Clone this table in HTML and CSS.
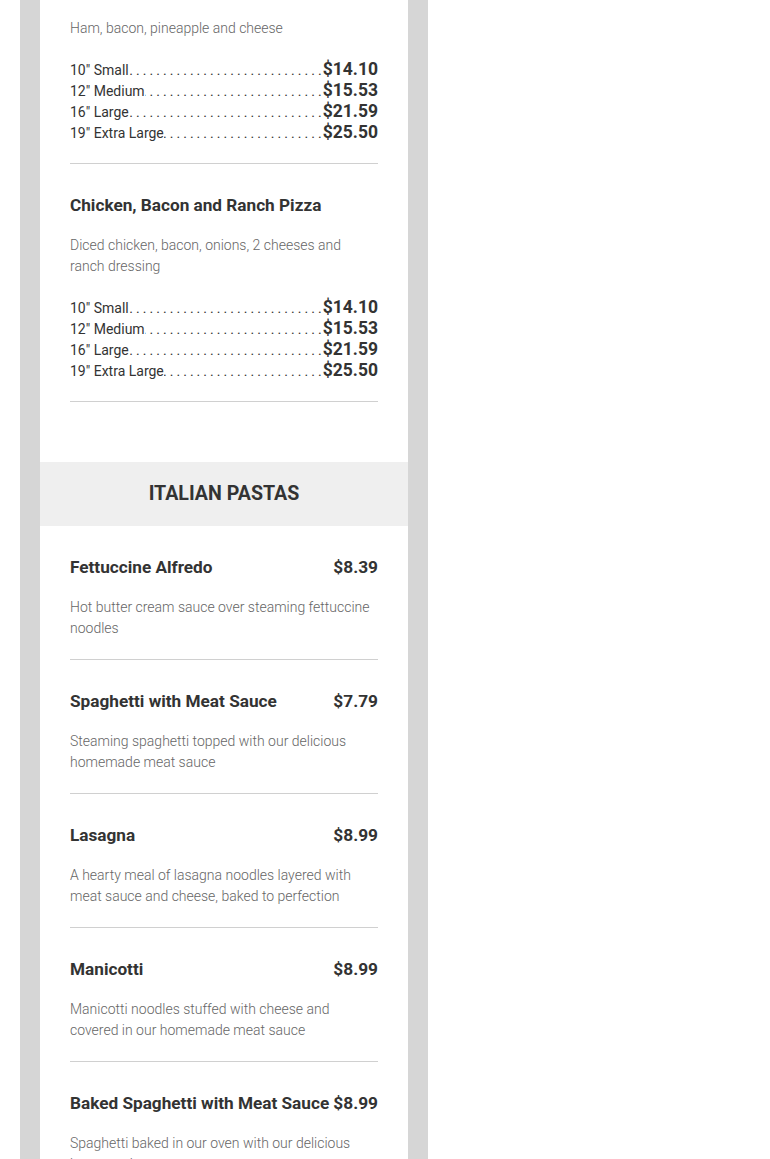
FILE: index.html
```html
<!DOCTYPE html>
<html>
<head>
<meta charset="utf-8">
<link rel="stylesheet" href="styles.css">
</head>
<body>
<div class="page">
  <div class="card">
    <div class="item item-first">
      <p class="desc">Ham, bacon, pineapple and cheese</p>
      <ul class="sizes">
        <li><span class="size">10" Small</span><span class="leader">........................................................</span><span class="sprice">$14.10</span></li>
        <li><span class="size">12" Medium</span><span class="leader">........................................................</span><span class="sprice">$15.53</span></li>
        <li><span class="size">16" Large</span><span class="leader">........................................................</span><span class="sprice">$21.59</span></li>
        <li><span class="size">19" Extra Large</span><span class="leader">........................................................</span><span class="sprice">$25.50</span></li>
      </ul>
    </div>
    <div class="item">
      <div class="head"><h3 class="title">Chicken, Bacon and Ranch Pizza</h3></div>
      <p class="desc">Diced chicken, bacon, onions, 2 cheeses and ranch dressing</p>
      <ul class="sizes">
        <li><span class="size">10" Small</span><span class="leader">........................................................</span><span class="sprice">$14.10</span></li>
        <li><span class="size">12" Medium</span><span class="leader">........................................................</span><span class="sprice">$15.53</span></li>
        <li><span class="size">16" Large</span><span class="leader">........................................................</span><span class="sprice">$21.59</span></li>
        <li><span class="size">19" Extra Large</span><span class="leader">........................................................</span><span class="sprice">$25.50</span></li>
      </ul>
    </div>
    <div class="section-head">ITALIAN PASTAS</div>
    <div class="item">
      <div class="head"><h3 class="title">Fettuccine Alfredo</h3><span class="price">$8.39</span></div>
      <p class="desc">Hot butter cream sauce over steaming fettuccine noodles</p>
    </div>
    <div class="item">
      <div class="head"><h3 class="title">Spaghetti with Meat Sauce</h3><span class="price">$7.79</span></div>
      <p class="desc">Steaming spaghetti topped with our delicious homemade meat sauce</p>
    </div>
    <div class="item">
      <div class="head"><h3 class="title">Lasagna</h3><span class="price">$8.99</span></div>
      <p class="desc">A hearty meal of lasagna noodles layered with meat sauce and cheese, baked to perfection</p>
    </div>
    <div class="item">
      <div class="head"><h3 class="title">Manicotti</h3><span class="price">$8.99</span></div>
      <p class="desc">Manicotti noodles stuffed with cheese and covered in our homemade meat sauce</p>
    </div>
    <div class="item">
      <div class="head"><h3 class="title">Baked Spaghetti with Meat Sauce</h3><span class="price">$8.99</span></div>
      <p class="desc">Spaghetti baked in our oven with our delicious homemade meat sauce</p>
    </div>
  </div>
</div>
</body>
</html>
```
FILE: styles.css
```css
* { box-sizing: border-box; }
html, body { margin: 0; padding: 0; background: #fff; }
body { font-family: Roboto, "Liberation Sans", sans-serif; color: #333; }
.page {
  margin-left: 20px;
  width: 408px;
  background: #d6d6d6;
  padding: 0 20px;
  min-height: 1159px;
}
.card {
  background: #fff;
  min-height: 1159px;
}
.item {
  margin: 0 30px;
  padding: 29px 0 20px;
  border-bottom: 1px solid #d0d0d0;
}
.item-first { padding-top: 18px; }
.item + .section-head { margin-top: 60px; }
.head {
  display: flex;
  justify-content: space-between;
  align-items: center;
  gap: 3px;
  height: 24px;
  margin-bottom: 18px;
}
.title {
  margin: 0;
  font-size: 17.2px;
  font-weight: 700;
  line-height: 24px;
  color: #333;
  white-space: nowrap;
}
.price {
  font-size: 17.3px;
  font-weight: 700;
  line-height: 24px;
  color: #333;
}
.desc {
  margin: 0;
  font-size: 14px;
  font-weight: 300;
  line-height: 21px;
  color: #666;
}
.sizes {
  list-style: none;
  margin: 20px 0 0;
  padding: 0;
}
.sizes li {
  display: flex;
  align-items: baseline;
  height: 21px;
  line-height: 21px;
}
.size {
  font-size: 14px;
  color: #333;
  white-space: nowrap;
}
.leader {
  flex: 1;
  overflow: hidden;
  white-space: nowrap;
  direction: rtl;
  font-size: 14px;
  letter-spacing: 3.05px;
  color: #333;
  margin-right: -2px;
}
.sprice {
  font-size: 17.5px;
  font-weight: 700;
  color: #333;
}
.section-head {
  background: #efefef;
  height: 64px;
  line-height: 64px;
  text-align: center;
  font-size: 19.6px;
  font-weight: 700;
  color: #333;
}
```
